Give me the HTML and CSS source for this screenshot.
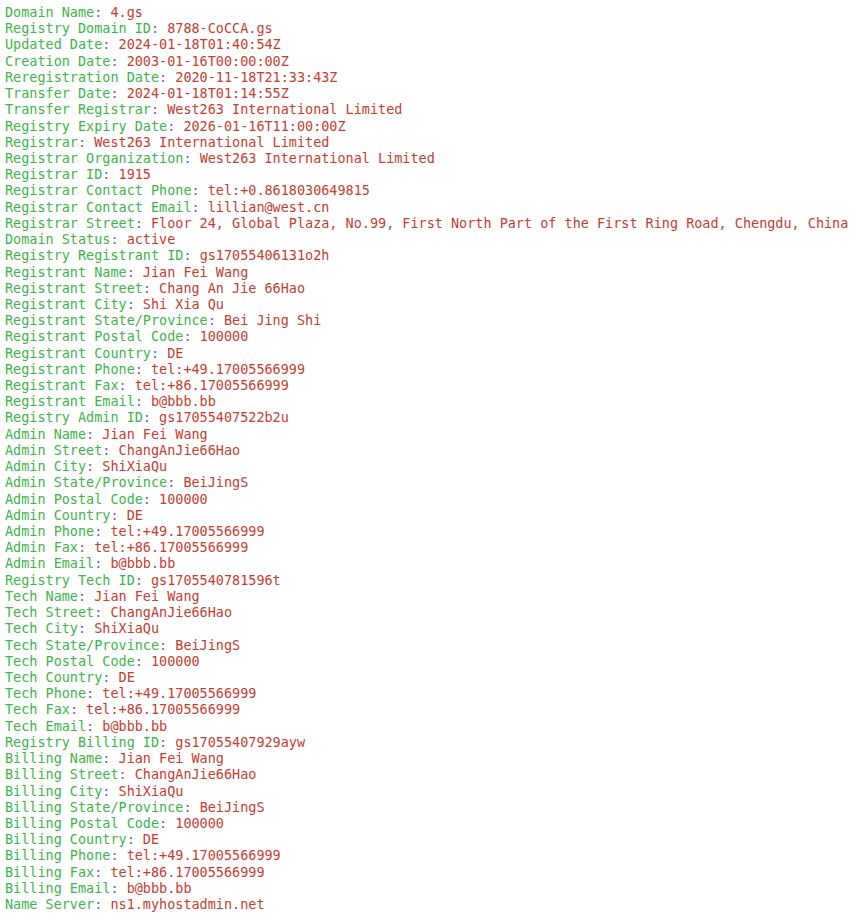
FILE: index.html
```html
<!DOCTYPE html>
<html>
<head>
<meta charset="utf-8">
<link rel="stylesheet" href="styles.css">
</head>
<body>
<pre class="whois"><span class="k">Domain Name</span><span class="c">:</span> <span class="v">4.gs</span>
<span class="k">Registry Domain ID</span><span class="c">:</span> <span class="v">8788-CoCCA.gs</span>
<span class="k">Updated Date</span><span class="c">:</span> <span class="v">2024-01-18T01:40:54Z</span>
<span class="k">Creation Date</span><span class="c">:</span> <span class="v">2003-01-16T00:00:00Z</span>
<span class="k">Reregistration Date</span><span class="c">:</span> <span class="v">2020-11-18T21:33:43Z</span>
<span class="k">Transfer Date</span><span class="c">:</span> <span class="v">2024-01-18T01:14:55Z</span>
<span class="k">Transfer Registrar</span><span class="c">:</span> <span class="v">West263 International Limited</span>
<span class="k">Registry Expiry Date</span><span class="c">:</span> <span class="v">2026-01-16T11:00:00Z</span>
<span class="k">Registrar</span><span class="c">:</span> <span class="v">West263 International Limited</span>
<span class="k">Registrar Organization</span><span class="c">:</span> <span class="v">West263 International Limited</span>
<span class="k">Registrar ID</span><span class="c">:</span> <span class="v">1915</span>
<span class="k">Registrar Contact Phone</span><span class="c">:</span> <span class="v">tel:+0.8618030649815</span>
<span class="k">Registrar Contact Email</span><span class="c">:</span> <span class="v">lillian@west.cn</span>
<span class="k">Registrar Street</span><span class="c">:</span> <span class="v">Floor 24, Global Plaza, No.99, First North Part of the First Ring Road, Chengdu, China</span>
<span class="k">Domain Status</span><span class="c">:</span> <span class="v">active</span>
<span class="k">Registry Registrant ID</span><span class="c">:</span> <span class="v">gs17055406131o2h</span>
<span class="k">Registrant Name</span><span class="c">:</span> <span class="v">Jian Fei Wang</span>
<span class="k">Registrant Street</span><span class="c">:</span> <span class="v">Chang An Jie 66Hao</span>
<span class="k">Registrant City</span><span class="c">:</span> <span class="v">Shi Xia Qu</span>
<span class="k">Registrant State/Province</span><span class="c">:</span> <span class="v">Bei Jing Shi</span>
<span class="k">Registrant Postal Code</span><span class="c">:</span> <span class="v">100000</span>
<span class="k">Registrant Country</span><span class="c">:</span> <span class="v">DE</span>
<span class="k">Registrant Phone</span><span class="c">:</span> <span class="v">tel:+49.17005566999</span>
<span class="k">Registrant Fax</span><span class="c">:</span> <span class="v">tel:+86.17005566999</span>
<span class="k">Registrant Email</span><span class="c">:</span> <span class="v">b@bbb.bb</span>
<span class="k">Registry Admin ID</span><span class="c">:</span> <span class="v">gs17055407522b2u</span>
<span class="k">Admin Name</span><span class="c">:</span> <span class="v">Jian Fei Wang</span>
<span class="k">Admin Street</span><span class="c">:</span> <span class="v">ChangAnJie66Hao</span>
<span class="k">Admin City</span><span class="c">:</span> <span class="v">ShiXiaQu</span>
<span class="k">Admin State/Province</span><span class="c">:</span> <span class="v">BeiJingS</span>
<span class="k">Admin Postal Code</span><span class="c">:</span> <span class="v">100000</span>
<span class="k">Admin Country</span><span class="c">:</span> <span class="v">DE</span>
<span class="k">Admin Phone</span><span class="c">:</span> <span class="v">tel:+49.17005566999</span>
<span class="k">Admin Fax</span><span class="c">:</span> <span class="v">tel:+86.17005566999</span>
<span class="k">Admin Email</span><span class="c">:</span> <span class="v">b@bbb.bb</span>
<span class="k">Registry Tech ID</span><span class="c">:</span> <span class="v">gs1705540781596t</span>
<span class="k">Tech Name</span><span class="c">:</span> <span class="v">Jian Fei Wang</span>
<span class="k">Tech Street</span><span class="c">:</span> <span class="v">ChangAnJie66Hao</span>
<span class="k">Tech City</span><span class="c">:</span> <span class="v">ShiXiaQu</span>
<span class="k">Tech State/Province</span><span class="c">:</span> <span class="v">BeiJingS</span>
<span class="k">Tech Postal Code</span><span class="c">:</span> <span class="v">100000</span>
<span class="k">Tech Country</span><span class="c">:</span> <span class="v">DE</span>
<span class="k">Tech Phone</span><span class="c">:</span> <span class="v">tel:+49.17005566999</span>
<span class="k">Tech Fax</span><span class="c">:</span> <span class="v">tel:+86.17005566999</span>
<span class="k">Tech Email</span><span class="c">:</span> <span class="v">b@bbb.bb</span>
<span class="k">Registry Billing ID</span><span class="c">:</span> <span class="v">gs17055407929ayw</span>
<span class="k">Billing Name</span><span class="c">:</span> <span class="v">Jian Fei Wang</span>
<span class="k">Billing Street</span><span class="c">:</span> <span class="v">ChangAnJie66Hao</span>
<span class="k">Billing City</span><span class="c">:</span> <span class="v">ShiXiaQu</span>
<span class="k">Billing State/Province</span><span class="c">:</span> <span class="v">BeiJingS</span>
<span class="k">Billing Postal Code</span><span class="c">:</span> <span class="v">100000</span>
<span class="k">Billing Country</span><span class="c">:</span> <span class="v">DE</span>
<span class="k">Billing Phone</span><span class="c">:</span> <span class="v">tel:+49.17005566999</span>
<span class="k">Billing Fax</span><span class="c">:</span> <span class="v">tel:+86.17005566999</span>
<span class="k">Billing Email</span><span class="c">:</span> <span class="v">b@bbb.bb</span>
<span class="k">Name Server</span><span class="c">:</span> <span class="v">ns1.myhostadmin.net</span></pre>
</body>
</html>
```

FILE: styles.css
```css
html, body {
  margin: 0;
  padding: 0;
  background: #ffffff;
}
.whois {
  margin: 0;
  padding: 4px 0 0 5px;
  font-family: "DejaVu Sans Mono", "Liberation Mono", monospace;
  font-size: 13.48px;
  line-height: 16.22px;
  white-space: pre;
}
.k { color: #3eb449; }
.c { color: #6f5fb0; }
.v { color: #c53d2f; }
```
